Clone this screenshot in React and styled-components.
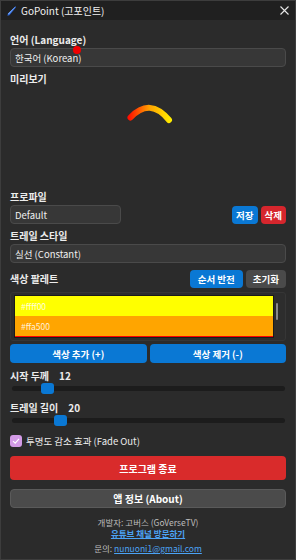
import React from 'react';
import styled, { createGlobalStyle } from 'styled-components';

const GlobalStyle = createGlobalStyle`
  html, body {
    margin: 0;
    padding: 0;
    background: #2b2b2b;
  }
  body {
    font-family: "Noto Sans CJK KR", "Noto Sans", sans-serif;
  }
`;

const Window = styled.div`
  position: relative;
  box-sizing: border-box;
  width: 296px;
  height: 560px;
  background: #2b2b2b;
  border: 1px solid #3d3d3d;
  overflow: hidden;
  color: #e8e8e8;
`;

const TitleBar = styled.div`
  height: 19px;
  background: #202020;
  display: flex;
  align-items: center;
  padding: 0 6px;
  gap: 5px;
`;

const TitleText = styled.span`
  flex: 1;
  font-size: 10px;
  color: #f0f0f0;
`;

const Content = styled.div`
  padding: 0 9px;
  display: flex;
  flex-direction: column;
`;

const Label = styled.div`
  font-size: 10px;
  font-weight: 700;
  line-height: 14px;
  color: #ececec;
  margin-top: ${p => p.$mt || 0}px;
  margin-bottom: ${p => p.$mb ?? 1}px;
  display: flex;
  align-items: center;
  gap: 10px;
`;

const Field = styled.div`
  box-sizing: border-box;
  height: 19px;
  width: ${p => p.$w || '100%'};
  background: #373737;
  border: 1px solid #4a4a4a;
  border-radius: 4px;
  font-size: 9.5px;
  color: #f0f0f0;
  display: flex;
  align-items: center;
  padding: 0 4px;
`;

const Dot = styled.div`
  position: absolute;
  left: 72px;
  top: 45px;
  width: 8px;
  height: 8px;
  border-radius: 50%;
  background: #f00000;
`;

const Preview = styled.div`
  height: 103px;
`;

const Row = styled.div`
  display: flex;
  align-items: center;
  gap: ${p => p.$gap || 3}px;
  margin-top: ${p => p.$mt || 0}px;
`;

const Spacer = styled.div`
  flex: 1;
`;

const SmallButton = styled.button`
  box-sizing: border-box;
  height: ${p => p.$h || 18}px;
  padding: 0 ${p => p.$px || 5}px;
  border: none;
  border-radius: 4px;
  background: ${p => p.$bg};
  color: #fff;
  font-family: inherit;
  font-size: 9.5px;
  font-weight: 700;
  cursor: pointer;
  flex: ${p => (p.$grow ? 1 : 'none')};
`;

const PaletteFrame = styled.div`
  display: flex;
  gap: 2px;
  height: 49px;
  box-sizing: border-box;
  margin-top: 4px;
  padding: 2px 6px 2px 3px;
  background: #2d2d2d;
  border: 1px solid #363636;
  border-radius: 3px;
`;

const PaletteList = styled.div`
  flex: 1;
  border: 1px solid #1a1a1a;
  overflow: hidden;
`;

const Swatch = styled.div`
  height: 20px;
  background: ${p => p.$color};
  color: rgba(255, 255, 255, 0.85);
  font-size: 8.5px;
  line-height: 20px;
  padding-left: 6px;
`;

const ScrollTrack = styled.div`
  width: 3px;
  padding-top: 8px;
`;

const ScrollThumb = styled.div`
  width: 2px;
  height: 17px;
  background: #8a8a8a;
  border-radius: 1px;
`;

const SliderTrack = styled.div`
  position: relative;
  height: 5px;
  margin: ${p => p.$mt}px 1px 0 2px;
  background: #1c1c1c;
  border-radius: 3px;
`;

const SliderThumb = styled.div`
  position: absolute;
  top: -3px;
  width: 13px;
  height: 11px;
  margin-left: -6px;
  background: #0a78d4;
  border-radius: 3px;
`;

const CheckRow = styled.label`
  display: flex;
  align-items: center;
  gap: 4px;
  margin-top: 11px;
  font-size: 9.5px;
  color: #ececec;
`;

const CheckBox = styled.span`
  width: 12px;
  height: 12px;
  border-radius: 3px;
  background: #d39be6;
  display: flex;
  align-items: center;
  justify-content: center;
`;

const WideButton = styled.button`
  box-sizing: border-box;
  width: 100%;
  height: ${p => p.$h}px;
  margin-top: ${p => p.$mt}px;
  border: ${p => p.$border || 'none'};
  border-radius: 4px;
  background: ${p => p.$bg};
  color: #fff;
  font-family: inherit;
  font-size: 10px;
  font-weight: 700;
`;

const Footer = styled.div`
  margin-top: 9px;
  display: flex;
  flex-direction: column;
  align-items: center;
  font-size: 8.5px;
  color: #bdbdbd;
  line-height: 10px;
`;

const FooterLine = styled.div`
  margin-top: ${p => p.$mt || 0}px;
`;

const Link = styled.a`
  color: #4ba3f5;
  text-decoration: underline;
  font-weight: ${p => (p.$bold ? 700 : 400)};
`;

// blue quill/pointer logo in the title bar
const AppIcon = () => (
  <svg width="9" height="10" viewBox="0 0 9 10">
    <path d="M8.6 0.3 L9 1.2 L2.4 9.2 L0.4 9.8 L0.9 7.8 Z" fill="#2a64d8" />
    <path d="M8.6 0.3 L7.6 1.9 L1.7 8.6 L0.9 7.8 Z" fill="#7fb0ff" />
  </svg>
);

const CloseIcon = () => (
  <svg width="9" height="9" viewBox="0 0 9 9">
    <path d="M0.5 0.5 L8.5 8.5 M8.5 0.5 L0.5 8.5" stroke="#e6e6e6" strokeWidth="1.1" />
  </svg>
);

const Check = () => (
  <svg width="8" height="8" viewBox="0 0 8 8">
    <path d="M1 4.2 L3.2 6.2 L7 1.8" stroke="#fff" strokeWidth="1.1" fill="none" />
  </svg>
);

const palette = ['#ffff00', '#ffa500', '#ff0000'];

const sliders = [
  { label: '시작 두께', value: 12, pos: 13, mt: 2, labelMt: 6 },
  { label: '트레일 길이', value: 20, pos: 17.6, mt: 2, labelMt: 10 },
];

export default function App() {
  return (
    <>
      <GlobalStyle />
      <Window>
        <TitleBar>
          <AppIcon />
          <TitleText>GoPoint (고포인트)</TitleText>
          <CloseIcon />
        </TitleBar>
        <Dot />
        <Content>
          <Label $mt={13}>언어 (Language)</Label>
          <Field>한국어 (Korean)</Field>
          <Label $mt={5}>미리보기</Label>
          <Preview>
            <svg width="276" height="103" viewBox="10 86 276 103">
              <defs>
                <linearGradient id="trail" x1="128" y1="0" x2="171" y2="0" gradientUnits="userSpaceOnUse">
                  <stop offset="0" stopColor="#ff0a00" />
                  <stop offset="0.5" stopColor="#ffa200" />
                  <stop offset="1" stopColor="#ffee00" />
                </linearGradient>
              </defs>
              <path d="M130.5 116.5 Q 150 96 169 119" stroke="url(#trail)" strokeWidth="6" strokeLinecap="round" fill="none" />
            </svg>
          </Preview>
          <Label>프로파일</Label>
          <Row>
            <Field $w="111px">Default</Field>
            <Spacer />
            <SmallButton $bg="#0a78d4" $px={4}>저장</SmallButton>
            <SmallButton $bg="#d6262d" $px={4}>삭제</SmallButton>
          </Row>
          <Label $mt={5}>트레일 스타일</Label>
          <Field>실선 (Constant)</Field>
          <Row $mt={7}>
            <Label $mb={0}>색상 팔레트</Label>
            <Spacer />
            <SmallButton $bg="#0a78d4" $px={8}>순서 반전</SmallButton>
            <SmallButton $bg="#4a4a4a" $px={7}>초기화</SmallButton>
          </Row>
          <PaletteFrame>
            <PaletteList>
              {palette.map(c => (
                <Swatch key={c} $color={c}>{c}</Swatch>
              ))}
            </PaletteList>
            <ScrollTrack>
              <ScrollThumb />
            </ScrollTrack>
          </PaletteFrame>
          <Row $mt={3}>
            <SmallButton $bg="#0a78d4" $grow $h={19}>색상 추가 (+)</SmallButton>
            <SmallButton $bg="#0a78d4" $grow $h={19}>색상 제거 (-)</SmallButton>
          </Row>
          {sliders.map(s => (
            <React.Fragment key={s.label}>
              <Label $mt={s.labelMt}>
                <span>{s.label}</span>
                <span>{s.value}</span>
              </Label>
              <SliderTrack $mt={s.mt}>
                <SliderThumb style={{ left: `${s.pos}%` }} />
              </SliderTrack>
            </React.Fragment>
          ))}
          <CheckRow>
            <CheckBox>
              <Check />
            </CheckBox>
            투명도 감소 효과 (Fade Out)
          </CheckRow>
          <WideButton $bg="#d92b2b" $h={24} $mt={8}>프로그램 종료</WideButton>
          <WideButton $bg="#4b4b4b" $h={19} $mt={9} $border="1px solid #5a5a5a">앱 정보 (About)</WideButton>
          <Footer>
            <FooterLine>개발자: 고버스 (GoVerseTV)</FooterLine>
            <FooterLine $mt={1}>
              <Link $bold>유튜브 채널 방문하기</Link>
            </FooterLine>
            <FooterLine $mt={5}>
              문의: <Link>nunuoni1@gmail.com</Link>
            </FooterLine>
          </Footer>
        </Content>
      </Window>
    </>
  );
}
